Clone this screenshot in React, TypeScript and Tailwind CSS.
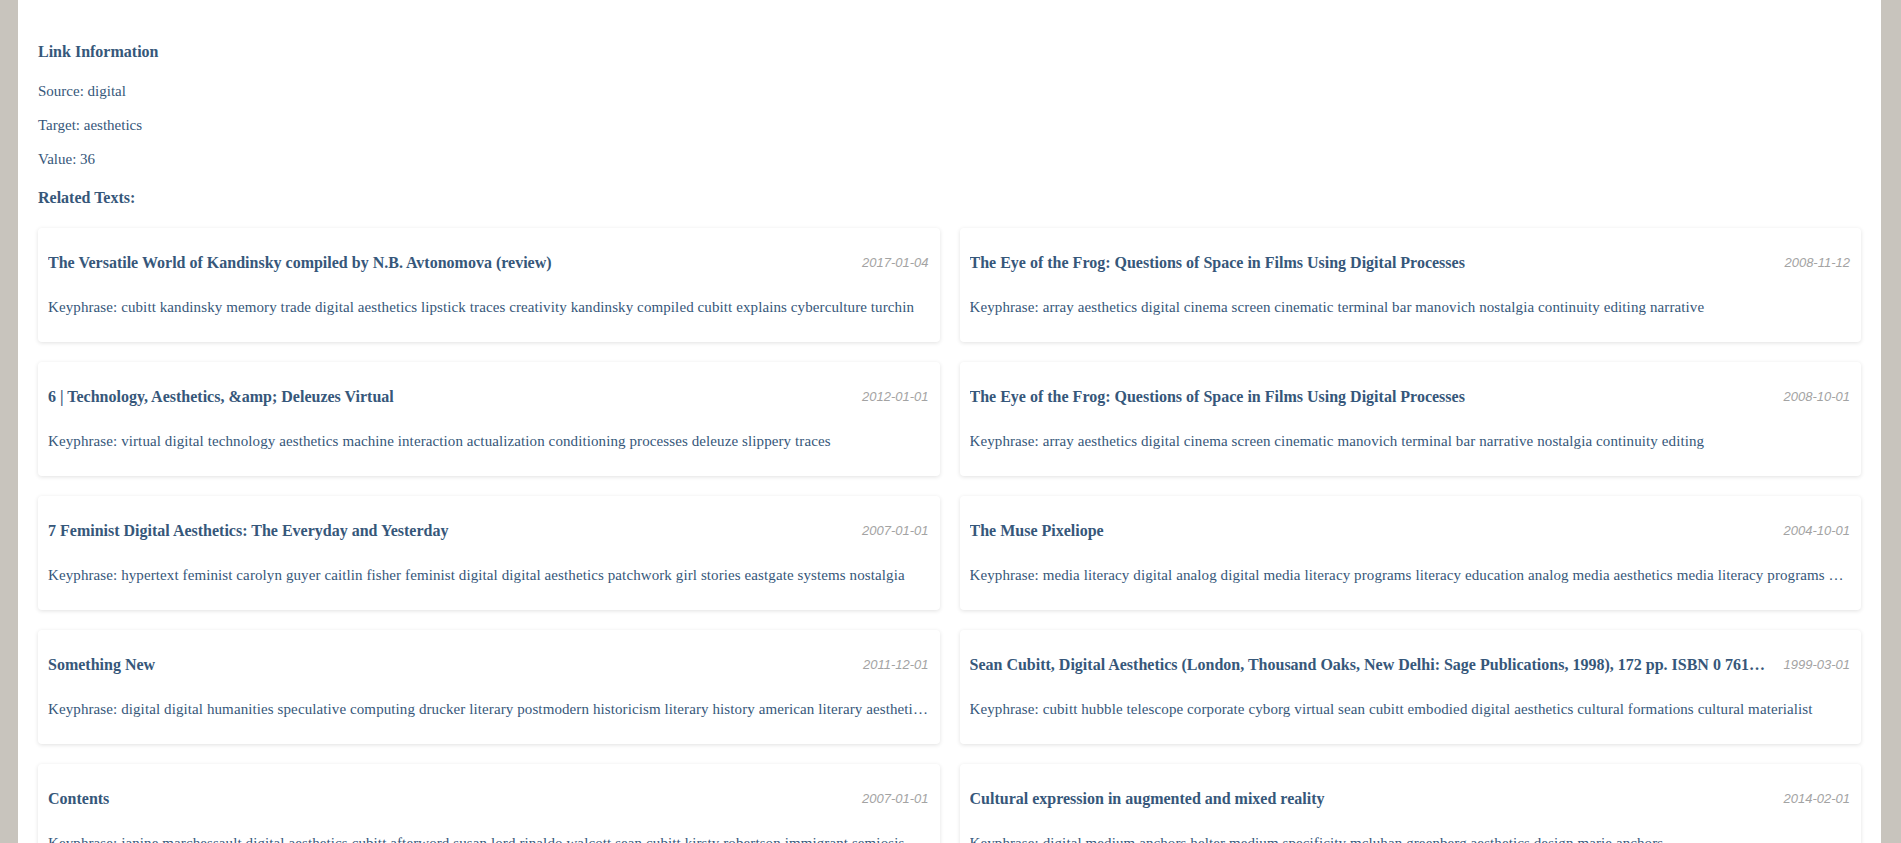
import React from 'react'

const texts = [
  { title: 'The Versatile World of Kandinsky compiled by N.B. Avtonomova (review)', date: '2017-01-04', key: 'cubitt kandinsky memory trade digital aesthetics lipstick traces creativity kandinsky compiled cubitt explains cyberculture turchin' },
  { title: 'The Eye of the Frog: Questions of Space in Films Using Digital Processes', date: '2008-11-12', key: 'array aesthetics digital cinema screen cinematic terminal bar manovich nostalgia continuity editing narrative' },
  { title: '6 | Technology, Aesthetics, &amp; Deleuzes Virtual', date: '2012-01-01', key: 'virtual digital technology aesthetics machine interaction actualization conditioning processes deleuze slippery traces' },
  { title: 'The Eye of the Frog: Questions of Space in Films Using Digital Processes', date: '2008-10-01', key: 'array aesthetics digital cinema screen cinematic manovich terminal bar narrative nostalgia continuity editing' },
  { title: '7 Feminist Digital Aesthetics: The Everyday and Yesterday', date: '2007-01-01', key: 'hypertext feminist carolyn guyer caitlin fisher feminist digital digital aesthetics patchwork girl stories eastgate systems nostalgia' },
  { title: 'The Muse Pixeliope', date: '2004-10-01', key: 'media literacy digital analog digital media literacy programs literacy education analog media aesthetics media literacy programs media literacy' },
  { title: 'Something New', date: '2011-12-01', key: 'digital digital humanities speculative computing drucker literary postmodern historicism literary history american literary aesthetics speculative' },
  { title: 'Sean Cubitt, Digital Aesthetics (London, Thousand Oaks, New Delhi: Sage Publications, 1998), 172 pp. ISBN 0 7619 5895 2', date: '1999-03-01', key: 'cubitt hubble telescope corporate cyborg virtual sean cubitt embodied digital aesthetics cultural formations cultural materialist' },
  { title: 'Contents', date: '2007-01-01', key: 'janine marchessault digital aesthetics cubitt afterword susan lord rinaldo walcott sean cubitt kirsty robertson immigrant semiosis' },
  { title: 'Cultural expression in augmented and mixed reality', date: '2014-02-01', key: 'digital medium anchors helter medium specificity mcluhan greenberg aesthetics design marie anchors' },
]

function TextCard({ title, date, keyphrase }: { title: string; date: string; keyphrase: string }) {
  return (
    <div className="bg-white rounded-[4px] shadow-[0_1px_4px_rgba(0,0,0,0.12)] px-[10px] pt-[24px] pb-[25px]">
      <div className="flex items-center h-[22px]">
        <h5 className="flex-1 min-w-0 truncate text-[16px] font-bold leading-[22px]">{title}</h5>
        <span className="shrink-0 ml-[15px] mr-px italic text-[13px] text-[#a3a3a3] font-['Liberation_Sans',sans-serif]">{date}</span>
      </div>
      <p className="mt-[23px] truncate text-[15px] tracking-[0.1px] leading-5">Keyphrase: {keyphrase}</p>
    </div>
  )
}

export default function App() {
  return (
    <div className="min-h-screen bg-[#c8c4bd] pl-[18px] pr-[20px] font-['Liberation_Serif',serif] text-[#36577a]">
      <div className="bg-white min-h-screen px-5 pt-[42px] pb-10">
        <h3 className="text-[16px] font-bold leading-5">Link Information</h3>
        <p className="mt-[19px] text-[15px] leading-5">Source: digital</p>
        <p className="mt-[14px] text-[15px] leading-5">Target: aesthetics</p>
        <p className="mt-[14px] text-[15px] leading-5">Value: 36</p>
        <h4 className="mt-[19px] text-[16px] font-bold leading-5">Related Texts:</h4>
        <div className="mt-5 grid grid-cols-2 gap-5">
          {texts.map((t, i) => (
            <TextCard key={i} title={t.title} date={t.date} keyphrase={t.key} />
          ))}
        </div>
      </div>
    </div>
  )
}
